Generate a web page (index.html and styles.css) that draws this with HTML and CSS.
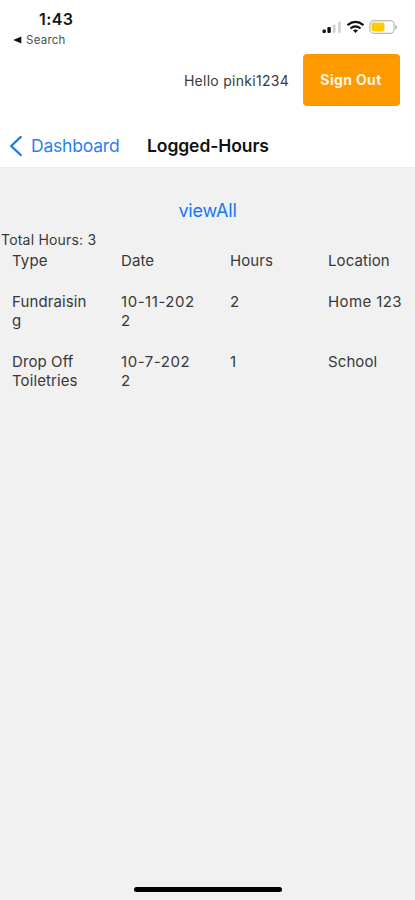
FILE: index.html
```html
<!DOCTYPE html>
<html lang="en">
<head>
<meta charset="utf-8">
<title>Logged-Hours</title>
<link rel="stylesheet" href="styles.css">
</head>
<body>
<div class="screen">
  <header class="top">
    <div class="status">
      <div class="status-left">
        <div class="time">1:43</div>
        <div class="back-app"><svg width="9" height="8" viewBox="0 0 9 8"><path d="M0.3 4 8.3 0.6V7.4Z" fill="#111"/></svg><span>Search</span></div>
      </div>
      <svg class="status-icons" width="76" height="16" viewBox="0 0 76 16">
        <rect x="0.5" y="9.500" width="3.400" height="3.500" rx="1.200" fill="#111"/>
        <rect x="5.400" y="7" width="3.400" height="6" rx="1.200" fill="#111"/>
        <rect x="10.800" y="4.500" width="2.800" height="8.500" rx="1" fill="#d2d2d2"/>
        <rect x="16" y="1.500" width="2.800" height="11.500" rx="1" fill="#d2d2d2"/>
        <g fill="none" stroke="#111" stroke-width="2.200"><path d="M25.500 5.100Q33.500 -1.300 41.500 5.100"/><path d="M28.500 8.500Q33.500 4.200 38.500 8.500"/></g>
        <path d="M30.900 10.300Q33.500 8.500 36.100 10.300L33.500 13Z" fill="#111"/>
        <rect x="47.900" y="0.700" width="24.200" height="12.600" rx="3.800" fill="#fff" stroke="#b8b8b8" stroke-width="1.200"/>
        <rect x="49.500" y="2.600" width="13" height="8.800" rx="1.800" fill="#fc0"/>
        <path d="M73.400 5V9.400Q75.100 8.500 75.100 7.200T73.400 5Z" fill="#aaa"/>
      </svg>
    </div>
    <div class="user"><span class="hello">Hello pinki1234</span><button class="signout">Sign Out</button></div>
    <nav class="nav">
      <a class="back"><svg width="13" height="22" viewBox="0 0 13 22"><path d="M11.700 2 2.200 11 11.700 20" fill="none" stroke="#1475f5" stroke-width="2.300" stroke-linecap="round" stroke-linejoin="round"/></svg><span>Dashboard</span></a>
      <h1>Logged-Hours</h1>
    </nav>
  </header>
  <main>
    <a class="view-all">viewAll</a>
    <div class="total">Total Hours: 3</div>
    <div class="row head"><div>Type</div><div>Date</div><div>Hours</div><div>Location</div></div>
    <div class="row"><div>Fundraisin<br>g</div><div class="date">10-11-202<br>2</div><div>2</div><div class="place">Home 123</div></div>
    <div class="row"><div>Drop Off<br>Toiletries</div><div class="date">10-7-202<br>2</div><div>1</div><div>School</div></div>
  </main>
  <div class="home"></div>
</div>
</body>
</html>
```
FILE: styles.css
```css
* { box-sizing: border-box; }
body { margin: 0; font-family: Inter, "Liberation Sans", sans-serif; color: #383838; }
.screen { width: 415px; height: 900px; display: flex; flex-direction: column; background: #f1f1f1; overflow: hidden; }
.top { height: 168px; background: #fff; border-bottom: 1px solid #ececec; }
.status { height: 54px; display: flex; justify-content: space-between; padding: 9px 17px 0 13px; }
.time { margin-left: 26px; font-size: 16px; font-weight: 600; line-height: 20px; color: #151515; letter-spacing: 0.4px; }
.back-app { display: flex; align-items: center; gap: 4px; font-size: 11.5px; line-height: 22px; color: #505050; letter-spacing: 0.25px; }
.status-icons { margin-top: 11px; }
.user { height: 52px; display: flex; justify-content: flex-end; align-items: center; padding-right: 15px; gap: 14px; }
.hello { font-size: 14px; letter-spacing: 0.28px; white-space: nowrap; }
.signout { width: 97px; height: 52px; border: 0; border-radius: 4px; background: #ff9900; color: #fff6e6; font: 700 14px Inter, sans-serif; letter-spacing: 0.35px; padding: 0 1px 2px 0; }
.nav { height: 61px; display: flex; align-items: center; padding: 18px 0 0 9px; }
.back { display: flex; align-items: center; gap: 9px; width: 138px; font-size: 17.5px; letter-spacing: -0.2px; color: #2b80f2; }
h1 { margin: 0; font-size: 17.5px; font-weight: 600; letter-spacing: -0.08px; color: #111; white-space: nowrap; }
main { flex: 1; padding-top: 32px; }
.view-all { display: block; text-align: center; font-size: 18px; line-height: 22px; letter-spacing: -0.15px; color: #1477f5; }
.total { margin-top: 8px; padding-left: 1px; font-size: 14px; line-height: 20px; letter-spacing: 0.2px; }
.row { display: grid; grid-template-columns: 109px 109px 98px 1fr; padding: 1px 0 0 12px; font-size: 15px; line-height: 19px; height: 60px; letter-spacing: 0.1px; white-space: nowrap; }
.head { height: 41px; }
.date { letter-spacing: 0.55px; }
.place { letter-spacing: 0.4px; }
.home { width: 148px; height: 5px; margin: 0 auto 8px; border-radius: 3px; background: #000; }
```
